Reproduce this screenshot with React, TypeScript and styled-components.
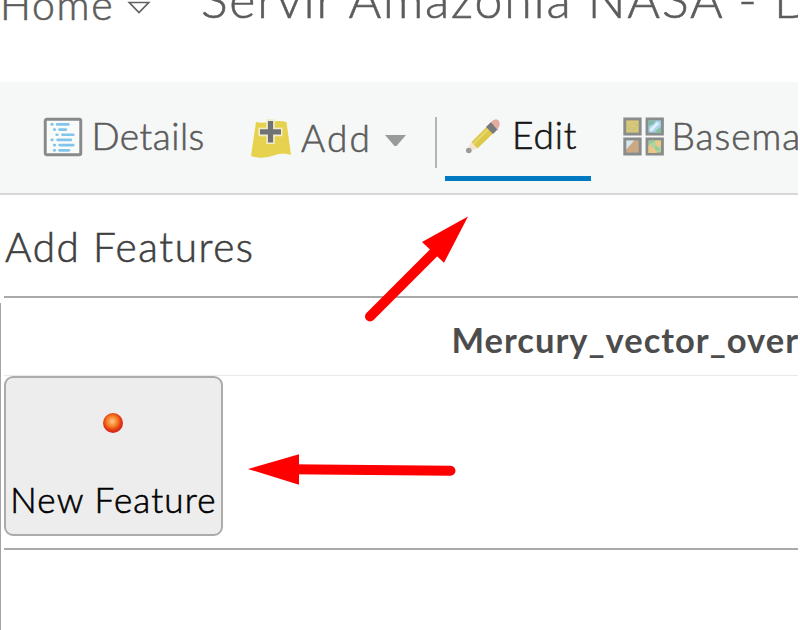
import React from 'react';
import styled, { createGlobalStyle } from 'styled-components';

const GlobalStyle = createGlobalStyle`
  * { box-sizing: border-box; }
  body { margin: 0; background: #fff; font-family: Lato, "Open Sans", sans-serif; }
`;

const Page = styled.div`
  position: relative;
  display: flex;
  flex-direction: column;
  width: 798px;
  height: 630px;
  overflow: hidden;
  background: #fff;
`;

const Label = styled.span<{ $size: number; $track: number; $color?: string; $bold?: boolean }>`
  display: block;
  white-space: nowrap;
  line-height: 40px;
  font-size: ${p => p.$size}px;
  font-weight: ${p => (p.$bold ? 700 : 300)};
  letter-spacing: ${p => p.$track}px;
  color: ${p => p.$color ?? '#5c5c5c'};
  -webkit-text-stroke: ${p => (p.$bold ? 0 : 0.6)}px currentColor;
`;

const Header = styled.header`
  display: flex;
  align-items: flex-start;
  flex: none;
  height: 82px;
`;

const HomeMenu = styled.div`
  display: flex;
  align-items: flex-start;
  flex: none;
  width: 200px;
  ${Label} { width: 127px; margin-top: -15px; }
`;

const Title = styled.div`
  margin: -21px 0 0 1px;
`;

const Toolbar = styled.nav`
  display: flex;
  flex: none;
  height: 113px;
  background: #f6f8f7;
  border-bottom: 2px solid #d7d8d8;
`;

const Tool = styled.div<{ $width: number }>`
  display: flex;
  align-items: center;
  flex: none;
  width: ${p => p.$width}px;
  height: 111px;
  svg { flex: none; }
  ${Label} { margin-bottom: 4px; }
`;

const DetailsTool = styled(Tool)`
  padding-left: 42.500px;
  svg { margin-bottom: 2px; }
  ${Label} { margin-left: 9px; }
`;

const AddTool = styled(Tool)`
  svg:first-child { margin-top: 2px; }
  svg:last-child { margin-top: 6px; }
  ${Label} { width: 84px; margin: 0 0 0 9px; }
`;

const Divider = styled.div`
  flex: none;
  width: 2px;
  height: 51px;
  margin: 35px 8px 0 0;
  background: #b4b5b5;
`;

const EditTool = styled(Tool)`
  height: 99px;
  margin-right: 32px;
  padding: 15px 0 0 19px;
  border-bottom: 5px solid #0079c1;
  ${Label} { margin: 0 0 2.600px 10px; }
`;

const BasemapTool = styled(Tool)`
  svg { margin-bottom: 2px; }
  ${Label} { margin-left: 7.500px; }
`;

const PanelTitle = styled.div`
  flex: none;
  height: 101px;
  padding: 31.500px 0 0 5px;
`;

const Panel = styled.section`
  display: flex;
  flex-direction: column;
  margin-left: 4px;
  height: 254px;
  border-top: 2px solid #a9a9a9;
  border-bottom: 2px solid #a9a9a9;
  flex: none;
`;

const LayerName = styled.div`
  flex: none;
  height: 78px;
  padding: 22px 0 0 447.500px;
  border-bottom: 1px solid #e9e9e9;
`;

const FeatureCard = styled.div`
  display: flex;
  flex-direction: column;
  align-items: center;
  width: 219px;
  height: 160px;
  padding-top: 34px;
  border: 2px solid #ababab;
  border-radius: 9px;
  background: #ededed;
  svg { margin-right: 1px; }
  ${Label} { margin-top: 44.500px; }
`;

const PanelEdge = styled.div`
  position: absolute;
  left: 0;
  top: 303px;
  bottom: 0;
  width: 1px;
  background: #a5a5a5;
`;

const Arrows = styled.svg`
  position: absolute;
  left: 0;
  top: 0;
  pointer-events: none;
`;

const DetailsIcon = () => {
  const rows = [[7, 11.5, 25], [9.5, 14, 22.5], [12, 17, 30], [7, 12, 27.5], [9.5, 14, 30], [9.5, 14, 25.5]];
  return (
    <svg width="40" height="40" viewBox="0 0 41 41">
      <rect x="2.3" y="2.3" width="36.4" height="36.4" rx="1.5" fill="#f9fbfb" stroke="#87898b" strokeWidth="3" />
      {rows.map(([dot, from, to], i) => (
        <g key={i} stroke="#82c4ea" strokeWidth="2.8" strokeLinecap="round">
          <path d={`M${dot + 2} ${7.6 + i * 5.300}h.6`} />
          <path d={`M${from + 3} ${7.6 + i * 5.300}H${to + 1}`} />
        </g>
      ))}
    </svg>
  );
};

const AddIcon = () => (
  <svg width="42" height="40" viewBox="0 0 42 40">
    <path d="M6 3Q12 4.500 20 3Q29 1 36.500 3L41 36Q33 33 25 36Q13 41 1 37Z" fill="#e6d24f" />
    <path d="M20.500 0V25M8.500 13H32.500" stroke="#f3eeca" strokeWidth="8.500" />
    <path d="M20.500 2V23.500M10 12.800H31" stroke="#717275" strokeWidth="5.200" />
  </svg>
);

const PencilIcon = () => (
  <svg width="38" height="38" viewBox="0 0 38 38">
    <path d="M3 31L7.500 24L13 30L6 34Z" fill="#f4e3cf" />
    <path d="M7.500 24L23 8.500L29.500 15L13.500 30.500Z" fill="#ddc849" />
    <path d="M9.500 26L25 10.500" stroke="#e6d86b" strokeWidth="2" />
    <path d="M22 9L27 4L34 11L29 16Z" fill="#77797c" />
    <path d="M27 4Q32 -1 35 3Q37 8 33 11.500Z" fill="#e5aaa0" />
    <circle cx="4.800" cy="32.500" r="2.800" fill="#9a9a9b" />
  </svg>
);

const BasemapIcon = () => (
  <svg width="41" height="39" viewBox="0 0 42 40">
    <g stroke="#898c8d" strokeWidth="3">
      <rect x="1.800" y="2" width="15.800" height="15.500" fill="#dcc776" />
      <rect x="24.600" y="2" width="15.800" height="15.500" fill="#a9d3ed" />
      <rect x="1.800" y="22.500" width="15.800" height="15.500" fill="#cda983" />
      <rect x="24.600" y="22.500" width="15.800" height="15.500" fill="#b5d29a" />
    </g>
    <path d="M4 8l3-3 4 2 4-2v4l-4 2 3 4H9l-5-2z" fill="#d6c779" />
    <path d="M5 13l3-3M11 6l4 3M9 14l5-3" stroke="#c3c67b" strokeWidth="1.500" />
    <path d="M26 3.500h8l-3 4-5 2z" fill="#83baa6" />
    <path d="M39 10v6h-7l3-3z" fill="#89bf99" />
    <path d="M28 14l8-8" stroke="#dceffb" strokeWidth="3" />
    <path d="M3.500 24h8L3.500 33z" fill="#d1e7f4" />
    <path d="M26 29l6 3 3 5h-9zM33 24h6v6l-4 1z" fill="#edc783" />
    <path d="M27 27l4-3M33 31l4 3" stroke="#91caa0" strokeWidth="2.500" />
  </svg>
);

export default function App() {
  return (
    <>
      <GlobalStyle />
      <Page>
        <Header>
          <HomeMenu>
            <Label $size={41} $track={1.7}>Home</Label>
            <svg width="24" height="16" viewBox="0 0 24 16">
              <path d="M2.300 2.500H21.700L12 12.500Z" fill="none" stroke="#626262" strokeWidth="1.700" />
            </svg>
          </HomeMenu>
          <Title><Label $size={50} $track={1.8}>Servir Amazonia NASA - D</Label></Title>
        </Header>

        <Toolbar>
          <DetailsTool $width={250}>
            <DetailsIcon />
            <Label $size={37} $track={0.5}>Details</Label>
          </DetailsTool>
          <AddTool $width={185}>
            <AddIcon />
            <Label $size={37} $track={2.2}>Add</Label>
            <svg width="22" height="12" viewBox="0 0 22 12"><path d="M0 0H21L11.500 11H9.500Z" fill="#999b9b" /></svg>
          </AddTool>
          <Divider />
          <EditTool $width={146}>
            <PencilIcon />
            <Label $size={37} $track={0.9} $color="#151515">Edit</Label>
          </EditTool>
          <BasemapTool $width={175}>
            <BasemapIcon />
            <Label $size={37} $track={1}>Basema</Label>
          </BasemapTool>
        </Toolbar>

        <PanelTitle><Label $size={40.5} $track={1.55} $color="#404040">Add Features</Label></PanelTitle>

        <Panel>
          <LayerName><Label $size={34.5} $track={1} $color="#4c4c4c" $bold>Mercury_vector_over</Label></LayerName>
          <FeatureCard>
            <svg width="22" height="22" viewBox="0 0 22 22">
              <defs>
                <radialGradient id="ember" cx=".46" cy=".42" r=".56">
                  <stop offset="0" stopColor="#ffc78c" />
                  <stop offset=".5" stopColor="#f37a20" />
                  <stop offset=".8" stopColor="#e53410" />
                  <stop offset="1" stopColor="#cf2a20" />
                </radialGradient>
              </defs>
              <circle cx="11" cy="11" r="10" fill="url(#ember)" />
            </svg>
            <Label $size={35} $track={1.15} $color="#000">New Feature</Label>
          </FeatureCard>
        </Panel>

        <PanelEdge />
        <Arrows width="798" height="630" viewBox="0 0 798 630">
          <g fill="#f00" stroke="#f00" strokeLinecap="round">
            <path d="M370 316.500L436 250.500" strokeWidth="10" />
            <path d="M468 216.500L422 242L444 262.800Z" stroke="none" />
            <path d="M290 469.300L450.500 470.800" strokeWidth="10" />
            <path d="M248 469L299 454.300V484.800Z" stroke="none" />
          </g>
        </Arrows>
      </Page>
    </>
  );
}
